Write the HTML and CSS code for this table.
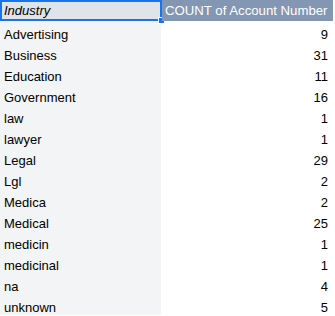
FILE: index.html
```html
<!DOCTYPE html>
<html>
<head>
<meta charset="utf-8">
<link rel="stylesheet" href="styles.css">
</head>
<body>
<div class="sheet">
  <div class="hcell sel">Industry<span class="handle"></span></div>
  <div class="hcell count">COUNT of Account Number</div>
  <div class="lbl">Advertising</div><div class="num">9</div>
  <div class="lbl">Business</div><div class="num">31</div>
  <div class="lbl">Education</div><div class="num">11</div>
  <div class="lbl">Government</div><div class="num">16</div>
  <div class="lbl">law</div><div class="num">1</div>
  <div class="lbl">lawyer</div><div class="num">1</div>
  <div class="lbl">Legal</div><div class="num">29</div>
  <div class="lbl">Lgl</div><div class="num">2</div>
  <div class="lbl">Medica</div><div class="num">2</div>
  <div class="lbl">Medical</div><div class="num">25</div>
  <div class="lbl">medicin</div><div class="num">1</div>
  <div class="lbl">medicinal</div><div class="num">1</div>
  <div class="lbl">na</div><div class="num">4</div>
  <div class="lbl">unknown</div><div class="num">5</div>
</div>
</body>
</html>
```
FILE: styles.css
```css
html, body {
  margin: 0;
  padding: 0;
  background: #ffffff;
}
.sheet {
  display: grid;
  grid-template-columns: 162px 171px;
  grid-auto-rows: 21px;
  font-family: "Liberation Sans", Arial, sans-serif;
  font-size: 13px;
  color: #000;
}
.hcell {
  position: relative;
  line-height: 21px;
  white-space: nowrap;
  box-sizing: border-box;
}
.sel {
  background: #dfe3ea;
  border: 2px solid #1a73e8;
  font-style: italic;
  padding-left: 2px;
  line-height: 17px;
}
.handle {
  position: absolute;
  right: -5px;
  bottom: -5px;
  width: 7px;
  height: 7px;
  background: #1a73e8;
  border: 1px solid #fff;
  box-sizing: border-box;
}
.count {
  background: #8396b3;
  color: #fff;
  padding-left: 3px;
  font-size: 13.2px;
}
.lbl {
  background: #f3f4f6;
  padding-left: 4px;
  line-height: 28px;
  margin-right: 1px;
}
.num {
  text-align: right;
  padding-right: 5px;
  line-height: 28px;
}
```
